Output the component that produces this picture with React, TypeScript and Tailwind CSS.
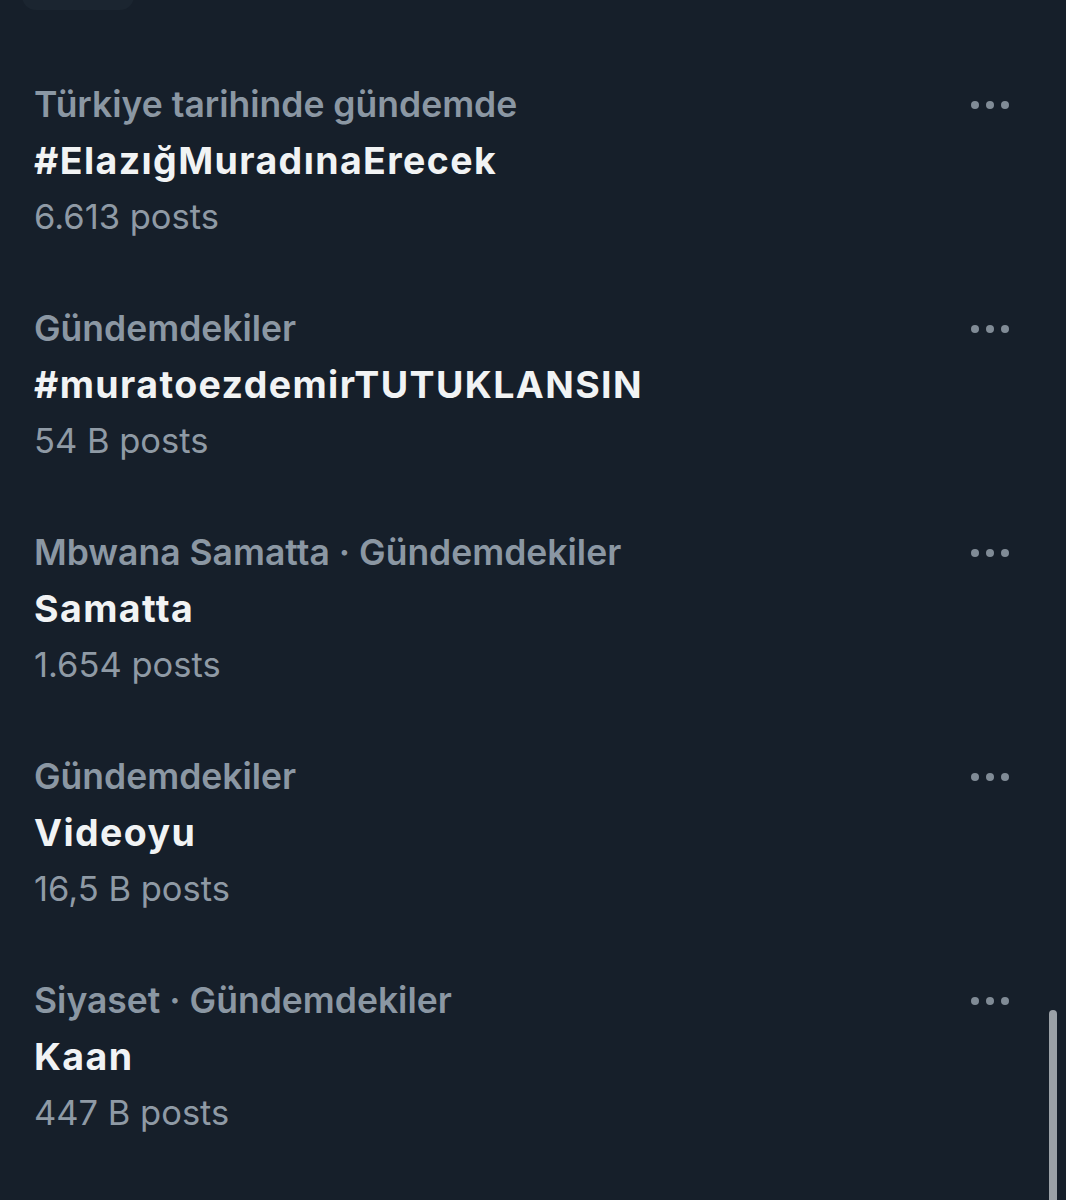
const trends = [
  { category: 'Türkiye tarihinde gündemde', title: '#ElazığMuradınaErecek', posts: '6.613 posts' },
  { category: 'Gündemdekiler', title: '#muratoezdemirTUTUKLANSIN', posts: '54 B posts' },
  { category: 'Mbwana Samatta · Gündemdekiler', title: 'Samatta', posts: '1.654 posts' },
  { category: 'Gündemdekiler', title: 'Videoyu', posts: '16,5 B posts' },
  { category: 'Siyaset · Gündemdekiler', title: 'Kaan', posts: '447 B posts' },
]

function MoreDots() {
  return (
    <div className="flex items-center gap-[7px]">
      <span className="block w-[8px] h-[8px] rounded-full bg-[#808b96]"></span>
      <span className="block w-[8px] h-[8px] rounded-full bg-[#808b96]"></span>
      <span className="block w-[8px] h-[8px] rounded-full bg-[#808b96]"></span>
    </div>
  )
}

export default function App() {
  return (
    <div
      className="relative w-[1066px] h-[1200px] overflow-hidden bg-[#161f2a]"
      style={{ fontFamily: 'Inter, Roboto, "Noto Sans", sans-serif' }}
    >
      {/* faint edge of the header control above */}
      <div className="absolute top-[-30px] left-[22px] w-[112px] h-[40px] rounded-[14px] bg-[#1b2530]"></div>

      <div className="flex flex-col pt-[77px]">
        {trends.map((t, i) => (
          <div key={i} className="flex items-start justify-between pl-[34px] pr-[57px] h-[224px]">
            <div className="flex flex-col">
              <p className="text-[35.5px] leading-[56px] font-semibold text-[#8b97a3] whitespace-nowrap">{t.category}</p>
              <p className="text-[37.5px] leading-[56px] font-bold text-[#f1f3f4] tracking-[1.4px] whitespace-nowrap">{t.title}</p>
              <p className="text-[34.5px] leading-[56px] text-[#8f9aa5] whitespace-nowrap">{t.posts}</p>
            </div>
            <div className="pt-[24px]">
              <MoreDots />
            </div>
          </div>
        ))}
      </div>

      {/* scrollbar */}
      <div className="absolute left-[1049px] top-[1010px] w-[8px] h-[200px] rounded-t-full bg-[#9ba1a7]"></div>
    </div>
  )
}
